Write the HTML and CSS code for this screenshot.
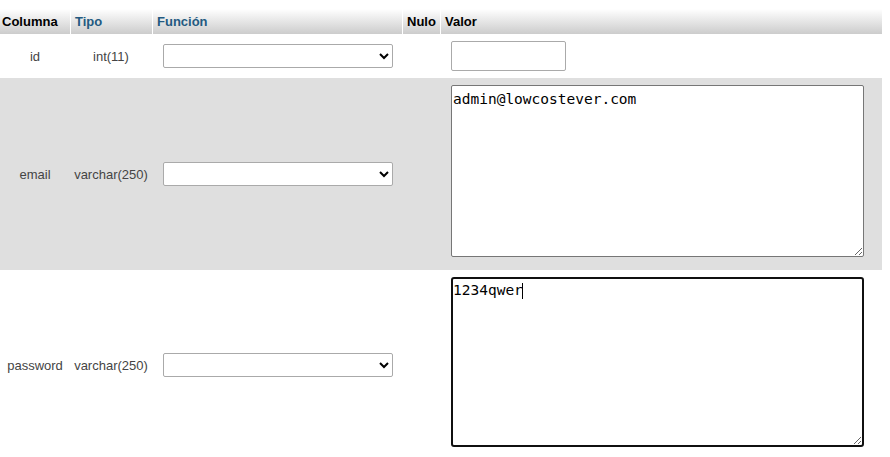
FILE: index.html
```html
<!DOCTYPE html>
<html lang="es">
<head>
<meta charset="utf-8">
<title>Insertar</title>
<link rel="stylesheet" href="styles.css">
</head>
<body>
<table class="insert-table">
  <colgroup>
    <col class="c-col">
    <col class="c-type">
    <col class="c-func">
    <col class="c-null">
    <col class="c-value">
  </colgroup>
  <thead>
    <tr>
      <th class="th-first">Columna</th>
      <th class="th-link">Tipo</th>
      <th class="th-link">Función</th>
      <th>Nulo</th>
      <th>Valor</th>
    </tr>
  </thead>
  <tbody>
    <tr class="row-odd">
      <td class="cell-name">id</td>
      <td class="cell-type">int(11)</td>
      <td class="cell-func"><select class="func-select"><option></option></select></td>
      <td class="cell-null"></td>
      <td class="cell-value cell-short"><input class="value-input" type="text" value=""></td>
    </tr>
    <tr class="row-even">
      <td class="cell-name">email</td>
      <td class="cell-type">varchar(250)</td>
      <td class="cell-func"><select class="func-select"><option></option></select></td>
      <td class="cell-null"></td>
      <td class="cell-value cell-tall"><textarea class="value-area">admin@lowcostever.com</textarea></td>
    </tr>
    <tr class="row-odd">
      <td class="cell-name">password</td>
      <td class="cell-type">varchar(250)</td>
      <td class="cell-func"><select class="func-select"><option></option></select></td>
      <td class="cell-null"></td>
      <td class="cell-value cell-tall">
        <div class="area-wrap">
          <textarea class="value-area value-area-focus">1234qwer</textarea>
          <span class="caret"></span>
        </div>
      </td>
    </tr>
  </tbody>
</table>
</body>
</html>
```

FILE: styles.css
```css
html, body {
  margin: 0;
  padding: 0;
  background: #fff;
}

body {
  font-family: "Liberation Sans", Arial, sans-serif;
  font-size: 13px;
  color: #444;
}

.insert-table {
  margin-top: 9px;
  width: 882px;
  table-layout: fixed;
  border-collapse: separate;
  border-spacing: 0;
}

.c-col { width: 70px; }
.c-type { width: 82px; }
.c-func { width: 250px; }
.c-null { width: 38px; }
.c-value { width: 442px; }

.insert-table th {
  height: 25px;
  padding: 0 0 0 4px;
  text-align: left;
  font-weight: bold;
  color: #000;
  background: linear-gradient(#ffffff, #cccccc);
  border-left: 1px solid #fff;
  white-space: nowrap;
  overflow: hidden;
}

.insert-table th.th-first {
  padding-left: 2px;
  border-left: 0;
}

.insert-table th.th-link {
  color: #235a81;
}

.insert-table td {
  padding: 0;
  vertical-align: middle;
}

.row-even td {
  background: #dfdfdf;
}

.cell-name,
.cell-type {
  text-align: center;
  white-space: nowrap;
}

.cell-func {
  padding-left: 11px !important;
}

.func-select {
  display: block;
  width: 230px;
  height: 24px;
  border: 1px solid #aaa;
  border-radius: 2px;
  background: #fff;
  font-family: "Liberation Sans", Arial, sans-serif;
  font-size: 13px;
}

.cell-value {
  padding-left: 11px !important;
}

.cell-short {
  padding-top: 7px !important;
  padding-bottom: 7px !important;
}

.cell-tall {
  padding-top: 7px !important;
  padding-bottom: 13px !important;
}

.value-input {
  display: block;
  box-sizing: border-box;
  width: 115px;
  height: 30px;
  margin: 0;
  border: 1px solid #aaa;
  border-radius: 2px;
  background: #fff;
}

.area-wrap {
  position: relative;
  width: 413px;
}

.value-area {
  display: block;
  box-sizing: border-box;
  width: 413px;
  height: 172px;
  margin: 0;
  padding: 5px 1px 4px;
  border: 1px solid #767676;
  border-radius: 2px;
  background: #fff;
  color: #000;
  font-family: "DejaVu Sans Mono", "Liberation Mono", monospace;
  font-size: 14.5px;
  resize: both;
}

.value-area-focus {
  height: 170px;
  border: 2px solid #101010;
  border-radius: 3px;
  padding: 3px 0;
}

.caret {
  position: absolute;
  left: 71px;
  top: 6px;
  width: 1px;
  height: 16px;
  background: #000;
}
```
